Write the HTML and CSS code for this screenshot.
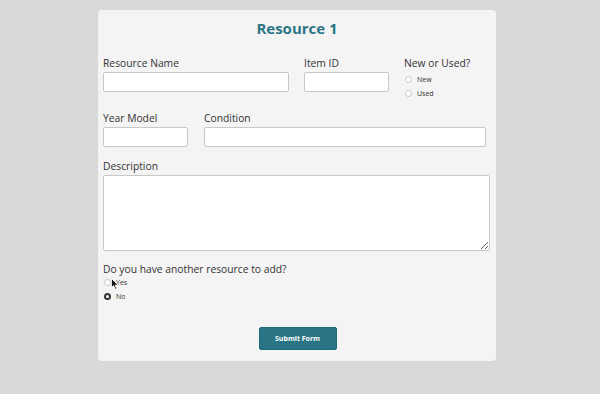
FILE: index.html
```html
<!DOCTYPE html>
<html lang="en">
    <head>
        <meta charset="UTF-8">
        <title>Resource Form</title>
        <link rel="stylesheet" href="styles.css">
    </head>
    <body>
        <form class="card" id="resourceForm">
            <h2 class="title">Resource 1</h2>
            <div class="row first">
                <div class="field name">
                    <label for="resource_name">Resource Name</label>
                    <input type="text" id="resource_name" name="resource_name">
                </div>
                <div class="field item">
                    <label for="item_id">Item ID</label>
                    <input type="text" id="item_id" name="item_id">
                </div>
                <div class="field state">
                    <label>New or Used?</label>
                    <div class="choice"><input type="radio" name="state" id="state_new"><label for="state_new">New</label></div>
                    <div class="choice"><input type="radio" name="state" id="state_used"><label for="state_used">Used</label></div>
                </div>
            </div>
            <div class="row second">
                <div class="field year">
                    <label for="year_model">Year Model</label>
                    <input type="text" id="year_model" name="year_model">
                </div>
                <div class="field condition">
                    <label for="condition">Condition</label>
                    <input type="text" id="condition" name="condition">
                </div>
            </div>
            <div class="field desc">
                <label for="description">Description</label>
                <textarea id="description" name="description"></textarea>
            </div>
            <div class="field another">
                <label>Do you have another resource to add?</label>
                <div class="choice"><input type="radio" name="another" id="another_yes"><label for="another_yes">Yes</label>
                    <svg class="cursor" width="8" height="12" viewBox="0 0 8 12"><path d="M0.5 0.5 L0.5 9.5 L2.6 7.6 L4.2 11.2 L5.6 10.6 L4.1 7.1 L7 7.1 Z" fill="#111" stroke="#fff" stroke-width="0.8"/></svg>
                </div>
                <div class="choice"><input type="radio" name="another" id="another_no" checked><label for="another_no">No</label></div>
            </div>
            <div class="actions">
                <button type="submit">Submit Form</button>
            </div>
        </form>
    </body>
</html>
```

FILE: styles.css
```css
body { margin: 0; background: #d9d9d9; font-family: "Open Sans", sans-serif; color: #333; }
.card { width: 388px; margin: 10px 0 0 98px; padding: 9px 5px 11px 5px; background: #f4f4f4; border-radius: 4px; }
.title { margin: 0 0 19px 0; text-align: center; font-size: 15px; line-height: 18px; font-weight: 700; color: #2a7585; }
.row { display: flex; gap: 15px; }
.first { margin-bottom: 11px; }
.second { margin-bottom: 12px; }
.field > label { display: block; font-size: 10.3px; line-height: 14px; margin-bottom: 2px; color: #333; }
.field input[type=text], textarea { display: block; box-sizing: border-box; height: 20px; border: 1px solid #c8c8c8; border-radius: 2px; background: #fff; margin: 0; }
.name input { width: 186px; }
.item input { width: 85px; }
.year input { width: 85px; }
.condition { margin-left: 1px; }
.condition input { width: 282px; }
.desc { margin-bottom: 11px; }
textarea { width: 387px; height: 76px; resize: vertical; }
.choice { display: flex; align-items: center; gap: 5px; height: 14px; position: relative; }
.choice label { font-size: 7px; color: #333; }
.choice input { appearance: none; box-sizing: border-box; width: 7px; height: 7px; margin: 0 0 0 1px; border: 1px solid #c4c4c4; border-radius: 50%; background: #fff; }
.choice input:checked { border: 2px solid #333; }
.another > label { margin-bottom: -1px; }
.cursor { position: absolute; left: 8px; top: 3px; }
.actions { display: flex; justify-content: center; margin-top: 24px; }
button { width: 78px; height: 23px; margin-left: 1px; border: 1px solid #24697a; border-radius: 2px; background: #2a7585; color: #fff; font-family: "Open Sans", sans-serif; font-size: 7px; font-weight: 700; }
```
